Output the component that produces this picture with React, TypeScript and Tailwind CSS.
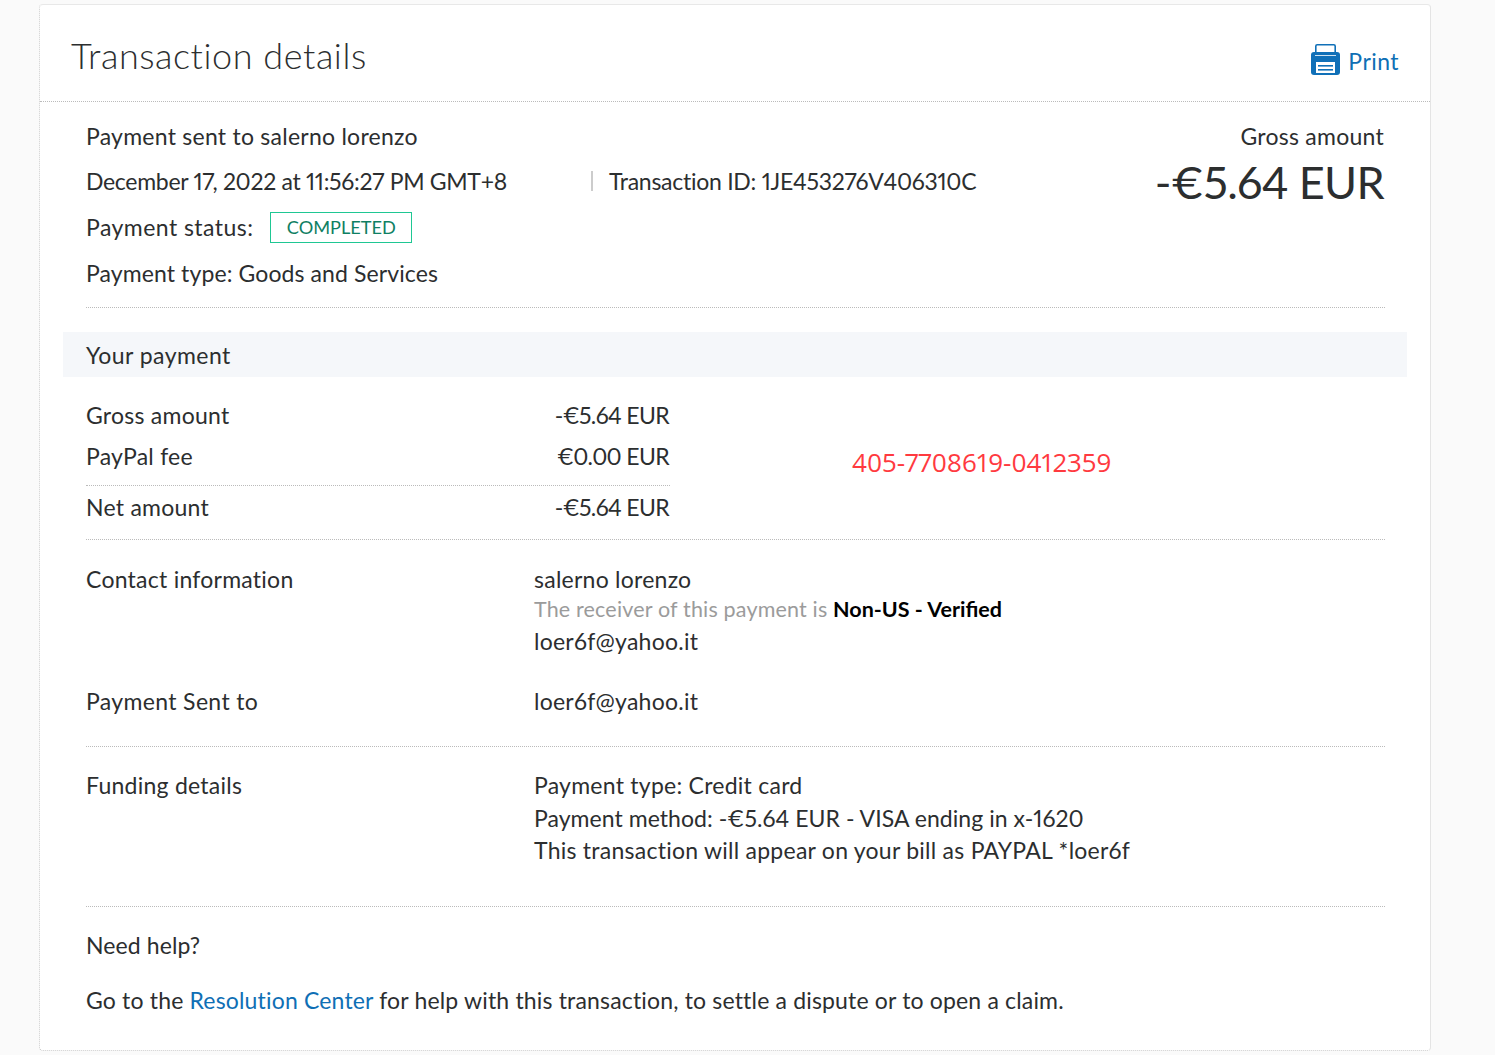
export default function App() {
  const divider = "border-b border-dotted border-[#bbbbbb]";
  const amount = "pr-[1px] tracking-[-0.65px]";
  return (
    <div className="min-h-[1055px] bg-[#fafafa] px-[39px] pt-[4px] font-['Lato','Noto_Sans',sans-serif] text-[23px] tracking-[0.25px] text-[#2c2e2f] proportional-nums">
      <div className="h-[1047px] w-[1392px] overflow-hidden rounded-[4px] border border-dotted border-t-solid border-r-solid border-[#cccccc] border-t-[#e8e8e8] border-r-[#e4e4e4] bg-white [border-top-style:solid] [border-right-style:solid]">
        <div className={`flex h-[97px] items-start justify-between pr-[31px] pl-[31px] ${divider}`}>
          <h1 className="mt-[26px] text-[36px] leading-[48px] font-light tracking-[0.55px]">Transaction details</h1>
          <a className="mt-[39px] flex items-start gap-[8px] text-[#0f6fb5]">
            <svg width="29" height="31" viewBox="0 0 29 31" aria-hidden="true">
              <path d="M4.8 9V2.2A1.4 1.4 0 0 1 6.2.8h16.6a1.4 1.4 0 0 1 1.4 1.4V9" fill="none" stroke="#1070b8" strokeWidth="1.6" />
              <path d="M3 8h23a3 3 0 0 1 3 3v17a3 3 0 0 1-3 3H3a3 3 0 0 1-3-3V11a3 3 0 0 1 3-3z" fill="#1070b8" />
              <rect x="5" y="18" width="19" height="11" fill="#fff" />
              <rect x="7" y="21" width="15" height="1.6" fill="#1070b8" />
              <rect x="7" y="25" width="15" height="1.6" fill="#1070b8" />
              <rect x="4" y="11" width="21" height="0.8" fill="#fff" />
            </svg>
            <span className="mt-[1px] leading-[32px] tracking-[0.45px]">Print</span>
          </a>
        </div>

        <div className="pr-[45px] pl-[46px]">
          <div className={`flex h-[206px] justify-between pt-[12px] ${divider}`}>
            <div className="flex flex-col">
              <p className="h-[45px] leading-[44px]">Payment sent to salerno lorenzo</p>
              <div className="flex h-[45px] items-center">
                <span className="w-[505px] tracking-[-0.3px]">December 17, 2022 at 11:56:27 PM GMT+8</span>
                <span className="mb-[2px] h-[20px] border-l-2 border-[#cccccc] pl-[16px] leading-[20px] tracking-[-0.27px]">Transaction ID: 1JE453276V406310C</span>
              </div>
              <div className="flex h-[46px] items-center gap-[17px]">
                <span className="tracking-[0.45px]">Payment status:</span>
                <span className="flex h-[31px] w-[142px] items-center justify-center border border-[#1fc793] pt-[2px] text-[18.2px] tracking-normal text-[#0f7f63]">COMPLETED</span>
              </div>
              <p className="h-[46px] leading-[46px] tracking-[0.1px]">Payment type: Goods and Services</p>
            </div>
            <div className="flex flex-col items-end pr-[1px]">
              <p className="h-[45px] leading-[44px]">Gross amount</p>
              <p className="-mt-[1px] text-[45px] leading-[48px] tracking-[-0.7px]">-€5.64 EUR</p>
            </div>
          </div>
        </div>

        <div className="mx-[23px] mt-[24px] flex h-[45px] items-center bg-[#f5f7fa] px-[23px] pt-[2px] tracking-[0.45px]">Your payment</div>

        <div className="pr-[45px] pl-[46px]">
          <div className={`pt-[18px] ${divider}`}>
            <div className="w-[584px]">
              <div className="flex h-[41px] items-center justify-between"><span>Gross amount</span><span className={amount}>-€5.64 EUR</span></div>
              <div className="relative flex h-[41px] items-center justify-between">
                <span>PayPal fee</span><span className={amount}>€0.00 EUR</span>
                <span className="absolute top-[8px] left-[766px] font-['Open_Sans',sans-serif] text-[26px] leading-[36px] tracking-normal whitespace-nowrap text-[#ff3a3f]">405-7708619-0412359</span>
              </div>
              <div className={`h-[9px] ${divider}`} />
              <div className="flex h-[42px] items-center justify-between"><span>Net amount</span><span className={amount}>-€5.64 EUR</span></div>
            </div>
            <div className="h-[11px]" />
          </div>

          <div className={`pt-[23px] ${divider}`}>
            <div className="flex">
              <span className="h-[32px] w-[448px] leading-[32px]">Contact information</span>
              <div>
                <p className="leading-[32px]">salerno lorenzo</p>
                <p className="text-[21.5px] leading-[29px] tracking-[0.17px] text-[#9b9b9b]">The receiver of this payment is <b className="font-bold tracking-normal text-black">Non-US - Verified</b></p>
                <p className="leading-[34px]">loer6f@yahoo.it</p>
              </div>
            </div>
            <div className="flex pt-[27px] pb-[29px]">
              <span className="w-[448px] leading-[32px] tracking-[0.35px]">Payment Sent to</span>
              <span className="leading-[32px]">loer6f@yahoo.it</span>
            </div>
          </div>

          <div className={`flex pt-[22px] pb-[39px] ${divider}`}>
            <span className="w-[448px] leading-[32px]">Funding details</span>
            <div className="leading-[32.5px]">
              <p>Payment type: Credit card</p>
              <p className="tracking-[0.05px]">Payment method: -€5.64 EUR - VISA ending in x-1620</p>
              <p>This transaction will appear on your bill as PAYPAL *loer6f</p>
            </div>
          </div>

          <p className="mt-[22px] leading-[32px] tracking-[0.1px]">Need help?</p>
          <p className="mt-[23px] leading-[32px] tracking-[0.17px]">Go to the <a className="text-[#0f6fb5]">Resolution Center</a> for help with this transaction, to settle a dispute or to open a claim.</p>
        </div>
      </div>
    </div>
  );
}
